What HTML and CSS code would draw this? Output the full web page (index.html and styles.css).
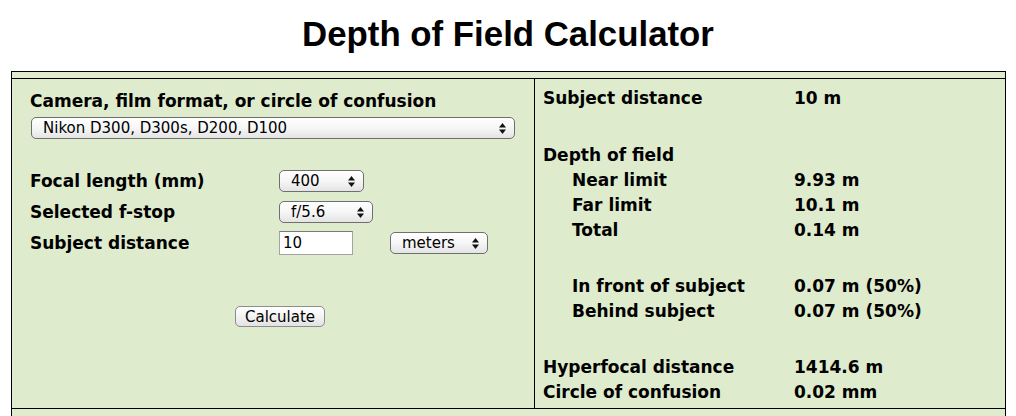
FILE: index.html
```html
<!DOCTYPE html>
<html>
<head>
<meta charset="utf-8">
<title>Depth of Field Calculator</title>
<link rel="stylesheet" href="styles.css">
</head>
<body>
<h1 class="title">Depth of Field Calculator</h1>
<div class="calc">
  <div class="band"></div>
  <div class="main">
    <form class="inputs">
      <div class="label cam-label">Camera, film format, or circle of confusion</div>
      <span class="popup popup-cam">
        <select><option>Nikon D300, D300s, D200, D100</option></select>
        <svg class="updown" viewBox="0 0 7 11" width="7" height="11"><polygon points="0,4.5 3.5,0 7,4.5"/><polygon points="0,6.5 3.5,11 7,6.5"/></svg>
      </span>
      <div class="fields">
        <div class="label">Focal length (mm)</div>
        <div><span class="popup popup-focal">
          <select><option>400</option></select>
          <svg class="updown" viewBox="0 0 7 11" width="7" height="11"><polygon points="0,4.5 3.5,0 7,4.5"/><polygon points="0,6.5 3.5,11 7,6.5"/></svg>
        </span></div>
        <div class="label">Selected f-stop</div>
        <div><span class="popup popup-fstop">
          <select><option>f/5.6</option></select>
          <svg class="updown" viewBox="0 0 7 11" width="7" height="11"><polygon points="0,4.5 3.5,0 7,4.5"/><polygon points="0,6.5 3.5,11 7,6.5"/></svg>
        </span></div>
        <div class="label">Subject distance</div>
        <div class="dist">
          <input class="text-in" type="text" value="10">
          <span class="popup popup-units">
            <select><option>meters</option></select>
            <svg class="updown" viewBox="0 0 7 11" width="7" height="11"><polygon points="0,4.5 3.5,0 7,4.5"/><polygon points="0,6.5 3.5,11 7,6.5"/></svg>
          </span>
        </div>
      </div>
      <div class="actions"><button type="button" class="btn">Calculate</button></div>
    </form>
    <div class="results">
      <div class="row"><span>Subject distance</span><span>10 m</span></div>
      <div class="gap gap-first"></div>
      <div class="row"><span>Depth of field</span><span></span></div>
      <div class="row"><span class="ind">Near limit</span><span>9.93 m</span></div>
      <div class="row"><span class="ind">Far limit</span><span>10.1 m</span></div>
      <div class="row"><span class="ind">Total</span><span>0.14 m</span></div>
      <div class="gap"></div>
      <div class="row"><span class="ind">In front of subject</span><span>0.07 m (50%)</span></div>
      <div class="row"><span class="ind">Behind subject</span><span>0.07 m (50%)</span></div>
      <div class="gap"></div>
      <div class="row"><span>Hyperfocal distance</span><span>1414.6 m</span></div>
      <div class="row"><span>Circle of confusion</span><span>0.02 mm</span></div>
    </div>
  </div>
  <div class="foot"></div>
</div>
</body>
</html>
```
FILE: styles.css
```css
html, body {
  margin: 0;
  padding: 0;
  background: #ffffff;
}
body {
  font-family: "DejaVu Sans", Verdana, sans-serif;
  color: #000;
}
.title {
  margin: 14px 0 17px;
  font-family: "Liberation Sans", Arial, sans-serif;
  font-weight: bold;
  font-size: 34.8px;
  line-height: 40px;
  text-align: center;
}
.calc {
  margin-left: 11px;
  width: 993px;
  border: 1px solid #000;
  border-bottom: none;
  background: #dfebcd;
}
.band {
  height: 6px;
  border-bottom: 1px solid #000;
}
.main {
  display: grid;
  grid-template-columns: 523px 1fr;
  height: 329px;
  border-bottom: 1px solid #000;
}
.foot {
  height: 12px;
}
.inputs {
  margin: 0;
  border-right: 1px solid #000;
  padding: 11px 4px 0 18px;
  display: flex;
  flex-direction: column;
  align-items: flex-start;
}
.label {
  font-weight: bold;
  font-size: 17px;
  line-height: 22px;
  white-space: nowrap;
}
.popup {
  display: inline-flex;
  align-items: center;
  box-sizing: border-box;
  height: 22px;
  border: 1px solid #6f6f6f;
  border-radius: 5px;
  background: linear-gradient(#ffffff 0%, #f6f6f6 50%, #e4e4e4 100%);
  padding-right: 8px;
}
.popup select {
  appearance: none;
  -webkit-appearance: none;
  border: none;
  background: transparent;
  font-family: "DejaVu Sans", sans-serif;
  font-size: 15px;
  color: #000;
  padding: 0 0 0 11px;
  margin: 0;
  flex: 1;
  min-width: 0;
  height: 20px;
  outline: none;
}
.updown {
  display: block;
  fill: #111;
  flex: none;
}
.popup-cam {
  margin: 5px 0 0 1px;
  width: 484px;
}
.popup-focal { width: 85px; }
.popup-fstop { width: 94px; }
.popup-units { width: 98px; }
.fields {
  margin-top: 31px;
  display: grid;
  grid-template-columns: 249px auto;
  grid-auto-rows: 22px;
  row-gap: 9px;
  align-items: center;
}
.fields > div:nth-child(even) {
  display: flex;
  align-items: center;
}
.dist {
  gap: 37px;
}
.text-in {
  box-sizing: border-box;
  width: 74px;
  height: 24px;
  border: 1px solid #a4a4a4;
  border-top-color: #7a7a7a;
  background: #fff;
  font-family: "DejaVu Sans", sans-serif;
  font-size: 15px;
  padding: 0 3px;
  margin: 0;
}
.actions {
  align-self: stretch;
  text-align: center;
  margin-top: 52px;
}
.btn {
  box-sizing: border-box;
  width: 90px;
  height: 21px;
  border: 1px solid #8d8d8d;
  border-radius: 5px;
  background: linear-gradient(#ffffff 0%, #f3f3f3 50%, #e2e2e2 100%);
  font-family: "DejaVu Sans", sans-serif;
  font-size: 15px;
  line-height: 18px;
  padding: 0;
  color: #000;
}
.results {
  padding: 7px 0 0 8px;
  display: flex;
  flex-direction: column;
  font-weight: bold;
  font-size: 17px;
  line-height: 25px;
  white-space: nowrap;
}
.row {
  display: grid;
  grid-template-columns: 251px 1fr;
  height: 25px;
}
.gap {
  height: 31px;
}
.gap-first {
  height: 32px;
}
.ind {
  padding-left: 29px;
}
```
